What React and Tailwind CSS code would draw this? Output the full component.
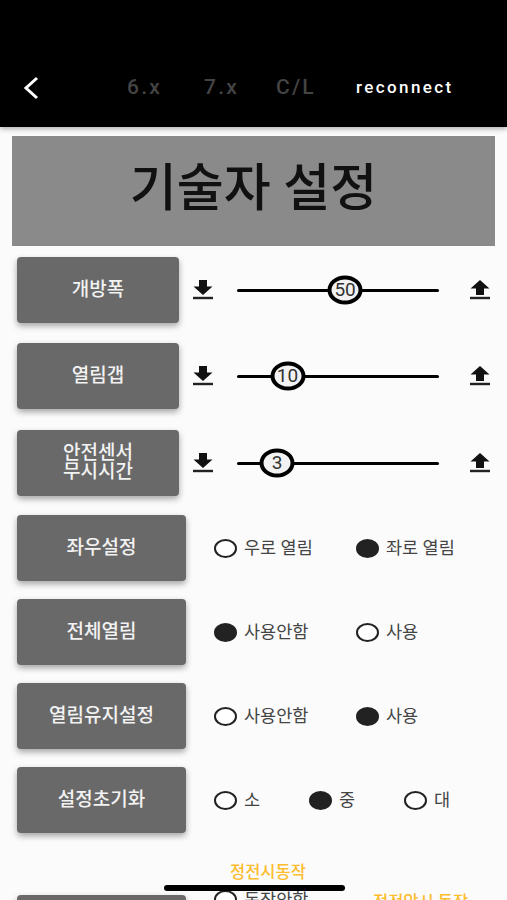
const KR = "font-['Roboto','Noto_Sans_CJK_KR',sans-serif]";

function DownIcon() {
  return (
    <svg width="20" height="20" viewBox="0 0 20 20" className="shrink-0">
      <path d="M6 0h8v6.5h5.5L10 15 .5 6.5H6z" fill="#111" />
      <rect x="0" y="16.8" width="20" height="2.4" fill="#222" />
    </svg>
  );
}

function UpIcon() {
  return (
    <svg width="20" height="20" viewBox="0 0 20 20" className="shrink-0">
      <path d="M10 0l9.5 8.5H14V15H6V8.500H.5z" fill="#111" />
      <rect x="0" y="16.8" width="20" height="2.4" fill="#222" />
    </svg>
  );
}

function Btn({ children, wide, className = "" }) {
  return (
    <div
      className={`${wide ? "w-[169px]" : "w-[162px]"} h-[66px] shrink-0 rounded-[4px] bg-[#696969] shadow-[0_3px_6px_rgba(0,0,0,0.35)] flex items-center justify-center pb-[2px] text-center text-[19px] leading-[19px] font-medium text-[#f2f2f2] ${className}`}
    >
      {children}
    </div>
  );
}

function SliderRow({ label, value, left, className }) {
  return (
    <div className={`flex items-center ${className}`}>
      <Btn>{label}</Btn>
      <div className="ml-[14px]">
        <DownIcon />
      </div>
      <div className="relative ml-[24px] h-[3px] w-[202px] rounded-full bg-black">
        <div
          className="absolute top-1/2 flex h-[29px] w-[35px] -translate-x-1/2 -translate-y-1/2 items-center justify-center rounded-[50%] border-[4px] border-black bg-[#f2f2f2] text-[19px] text-[#333]"
          style={{ left }}
        >
          {value}
        </div>
      </div>
      <div className="ml-[31px]">
        <UpIcon />
      </div>
    </div>
  );
}

function Radio({ label, on, className = "" }) {
  return (
    <div className={`flex items-center gap-[7px] ${className}`}>
      <span
        className={`h-[19px] w-[23px] shrink-0 rounded-[50%] border-2 border-[#222] ${on ? "bg-[#222]" : "bg-white"}`}
      />
      <span className="text-[17.5px] leading-[18px] text-[#444]">{label}</span>
    </div>
  );
}

function RadioRow({ label, options, widthClass = "w-[142px]", className = "" }) {
  return (
    <div className={`flex items-center ${className}`}>
      <Btn wide>{label}</Btn>
      <div className="ml-[28px] flex">
        {options.map(([t, on]) => (
          <Radio key={t} label={t} on={on} className={widthClass} />
        ))}
      </div>
    </div>
  );
}

export default function App() {
  return (
    <div className={`relative h-[900px] w-[507px] overflow-hidden bg-[#fbfbfb] ${KR}`}>
      <header className="flex h-[127px] items-end bg-black pb-[27px] shadow-[0_2px_5px_rgba(0,0,0,0.3)]">
        <svg width="16" height="24" viewBox="0 0 16 24" className="ml-[23px] shrink-0">
          <path d="M14 2L3 12l11 10" fill="none" stroke="#fff" strokeWidth="3" />
        </svg>
        <nav className="ml-[88px] flex h-[24px] items-center text-[21px] font-medium tracking-[2.2px] text-[#444]">
          <span className="w-[77px]">6.x</span>
          <span className="w-[72px]">7.x</span>
          <span className="w-[80px]">C/L</span>
          <span className="text-[17px] tracking-[2.4px] text-white">reconnect</span>
        </nav>
      </header>

      <div className="mx-[12px] mt-[9px] flex h-[110px] items-center justify-center bg-[#8a8a8a] pb-[5px] text-[51px] font-medium leading-none text-[#111]">
        기술자 설정
      </div>

      <div className="pl-[17px]">
        <SliderRow className="mt-[11px]" label="개방폭" value="50" left="53.5%" />
        <SliderRow className="mt-[20px]" label="열림갭" value="10" left="25%" />
        <SliderRow className="mt-[21px]" label={<>안전센서<br />무시시간</>} value="3" left="19.8%" />
        <RadioRow className="mt-[19px]" label="좌우설정" options={[["우로 열림", false], ["좌로 열림", true]]} />
        <RadioRow className="mt-[18px]" label="전체열림" options={[["사용안함", true], ["사용", false]]} />
        <RadioRow className="mt-[18px]" label="열림유지설정" options={[["사용안함", false], ["사용", true]]} />
        <RadioRow className="mt-[18px]" label="설정초기화" widthClass="w-[95px]" options={[["소", false], ["중", true], ["대", false]]} />

        <div className="ml-[213px] mt-[31px] text-[16.5px] font-medium leading-[18px] text-[#fbbd2c]">정전시동작</div>
        <div className="mt-[8px] flex items-start">
          <Btn wide className="mt-[5px]" />
          <Radio className="ml-[28px] w-[159px]" label="동작안함" />
          <span className="mt-[4px] text-[16.5px] font-medium leading-[18px] text-[#fbbd2c]">정전압시 동작</span>
        </div>
      </div>

      <div className="absolute left-[164px] top-[885px] h-[6px] w-[181px] rounded-full bg-black" />
    </div>
  );
}
